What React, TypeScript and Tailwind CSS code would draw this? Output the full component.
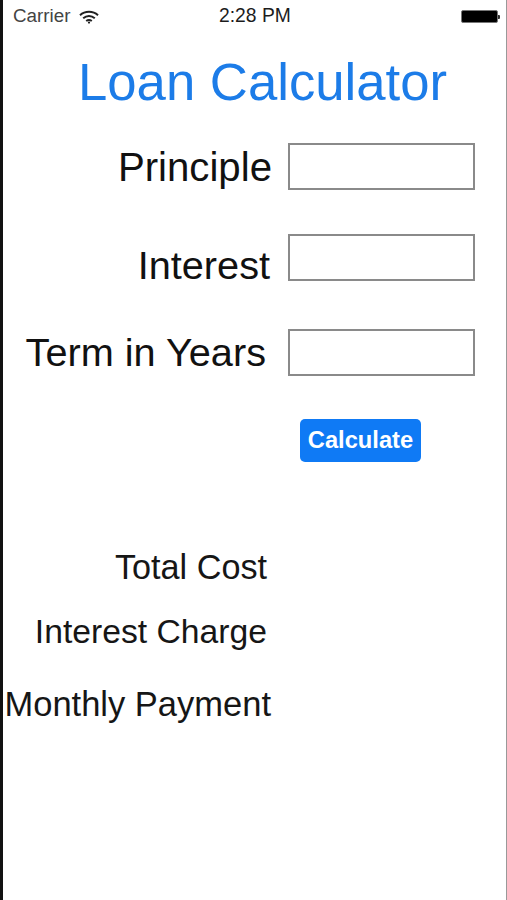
import { Fragment } from "react";

const fields = [
  { label: "Principle", labelClass: "pr-[16px] pt-[3px] text-[40.2px]", top: "mt-[32px]" },
  { label: "Interest", labelClass: "pr-[18px] pt-[9px] text-[39.7px]", top: "mt-[44px]" },
  { label: "Term in Years", labelClass: "pr-[22px] pt-[1px] text-[39.7px]", top: "mt-[48px]" },
];

const results = [
  { label: "Total Cost", rowClass: "mt-[85px] pr-[239px] text-[34.2px]" },
  { label: "Interest Charge", rowClass: "mt-[24px] pr-[239px] text-[33.7px]" },
  { label: "Monthly Payment", rowClass: "mt-[33px] pr-[235px] text-[34.5px]" },
];

function StatusBar() {
  return (
    <div className="relative flex h-[32px] items-center pl-[10px] pr-[6px] pt-[1px] text-[18.8px] text-[#2b2b2b]">
      <span className="text-[#444]">Carrier</span>
      <svg width="20" height="14" viewBox="0 0 20 14" className="ml-[9px]" fill="none" stroke="#222" strokeWidth="2">
        <path d="M1 5.2C6 0.6 14 0.6 19 5.2" />
        <path d="M4.2 8.2C7.6 5.2 12.4 5.2 15.8 8.2" />
        <path d="M7.2 11C8.8 9.8 11.2 9.8 12.8 11" />
        <circle cx="10" cy="12.6" r="1.1" fill="#222" stroke="none" />
      </svg>
      <span className="absolute left-[216px] text-[19.3px] text-[#1c1c1c]">2:28 PM</span>
      <div className="ml-auto flex items-center">
        <div className="h-[13px] w-[37px] rounded-[2px] border border-[#777] bg-black" />
        <div className="h-[4px] w-[2px] rounded-r-[1px] bg-[#333]" />
      </div>
    </div>
  );
}

export default function App() {
  return (
    <div className="flex min-h-[900px] border-l-[3px] border-r-[1px] border-l-[#111] border-r-[#999] bg-white font-['Liberation_Sans',Arial,sans-serif]">
      <div className="w-full">
        <StatusBar />

        <h1 className="mt-[21px] pl-[75px] text-[52.7px] leading-[58px] font-normal text-[#1c7ce8]">Loan Calculator</h1>

        <div className="grid grid-cols-[285px_187px]">
          {fields.map((f) => (
            <Fragment key={f.label}>
              <div className={`${f.top} ${f.labelClass} h-[47px] text-right leading-[44px] text-[#111]`}>{f.label}</div>
              <div className={f.top}>
                <div className="h-[47px] w-[187px] border-2 border-[#8a8a8a] bg-white" />
              </div>
            </Fragment>
          ))}
        </div>

        <div className="mt-[43px] pl-[297px]">
          <button className="flex h-[43px] w-[121px] items-center justify-center rounded-[5px] bg-[#0f7af5] text-[23.7px] font-bold text-white">
            Calculate
          </button>
        </div>

        {results.map((r) => (
          <div key={r.label} className={`${r.rowClass} text-right leading-[40px] text-[#161616]`}>
            {r.label}
          </div>
        ))}
      </div>
    </div>
  );
}
